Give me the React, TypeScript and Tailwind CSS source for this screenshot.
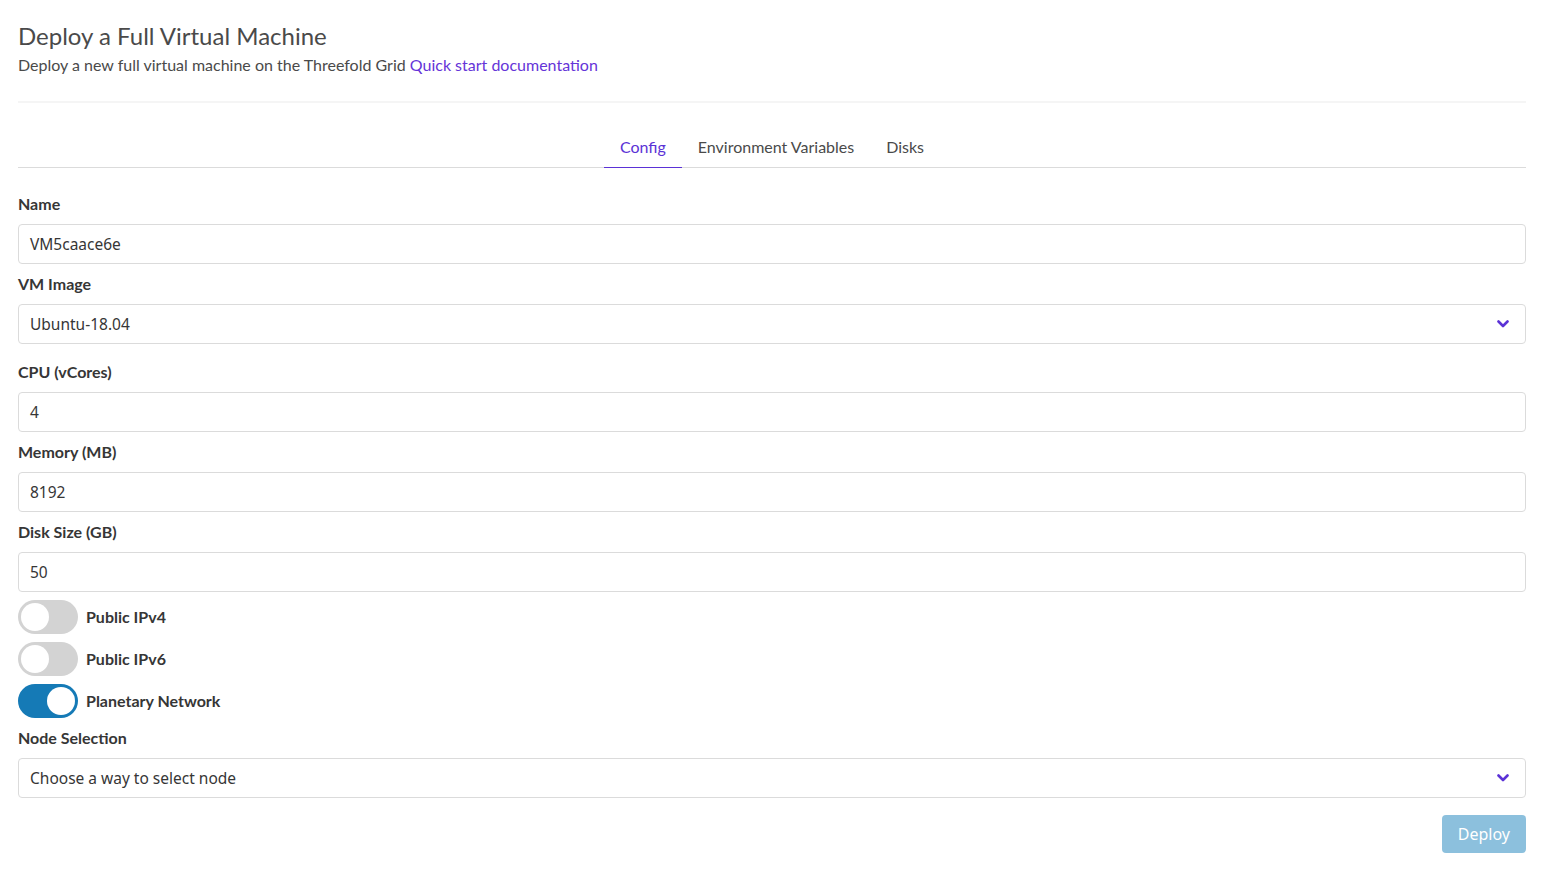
import React, { useState } from 'react';

const FONT = { fontFamily: 'Lato, "Noto Sans", sans-serif' };
const INPUT_FONT = { fontFamily: '"Noto Sans", Lato, sans-serif' };

const Label: React.FC<{ children: React.ReactNode }> = ({ children }) => (
  <label className="block h-6 leading-6 mb-2 text-[16px] font-bold text-[#363636]">{children}</label>
);

const TextField: React.FC<{ label: string; value: string }> = ({ label, value }) => (
  <div className="mb-2">
    <Label>{label}</Label>
    <div
      className="h-10 rounded border border-[#dbdbdb] bg-white px-[11px] pt-[2px] flex items-center text-[15.5px] text-[#363636]"
      style={INPUT_FONT}
    >
      {value}
    </div>
  </div>
);

const SelectField: React.FC<{ label: string; value: string; className?: string }> = ({ label, value, className }) => (
  <div className={className}>
    <Label>{label}</Label>
    <div
      className="h-10 rounded border border-[#dbdbdb] bg-white pl-[11px] pr-4 flex items-center justify-between text-[15.5px] text-[#363636]"
      style={INPUT_FONT}
    >
      <span className="pt-[2px]">{value}</span>
      <svg width="12" height="8" viewBox="0 0 12 8" fill="none">
        <path d="M1.5 1.5 L6 6 L10.5 1.5" stroke="#5b32d6" strokeWidth="2.6" strokeLinecap="round" strokeLinejoin="round" />
      </svg>
    </div>
  </div>
);

const Toggle: React.FC<{ label: string; initial?: boolean }> = ({ label, initial = false }) => {
  const [on, setOn] = useState(initial);
  return (
    <div className="flex items-center h-[34px] mb-2 cursor-pointer" onClick={() => setOn(!on)}>
      <div className={`relative w-[60px] h-[34px] rounded-full ${on ? 'bg-[#157ab6]' : 'bg-[#d3d3d3]'}`}>
        <div
          className={`absolute top-[3px] w-[28px] h-[28px] rounded-full bg-white ${on ? 'left-[29px]' : 'left-[3px]'}`}
        />
      </div>
      <span className="ml-2 text-[16px] font-bold text-[#363636]">{label}</span>
    </div>
  );
};

export default function App() {
  const [tab, setTab] = useState('Config');
  const tabs = ['Config', 'Environment Variables', 'Disks'];

  return (
    <div className="min-h-screen bg-white pl-[18px] pr-[17px] pt-5 pb-4" style={FONT}>
      {/* Header */}
      <h1 className="text-[24px] leading-8 text-[#4a4a4a]">Deploy a Full Virtual Machine</h1>
      <p className="mt-[2px] text-[16px] leading-[22px] text-[#4a4a4a]">
        Deploy a new full virtual machine on the Threefold Grid{' '}
        <a href="#" className="text-[#6534d8]">Quick start documentation</a>
      </p>
      <div className="mt-[25px] h-[2px] bg-[#f5f5f5]" />

      {/* Tabs */}
      <div className="mt-[25px] flex justify-center border-b border-[#dbdbdb]">
        {tabs.map(t => (
          <button
            key={t}
            onClick={() => setTab(t)}
            className={`h-10 px-4 pb-[2px] -mb-px text-[16px] border-b ${
              tab === t ? 'text-[#5b32d6] border-[#5b32d6]' : 'text-[#4a4a4a] border-transparent'
            }`}
          >
            {t}
          </button>
        ))}
      </div>

      {/* Form */}
      <div className="mt-6">
        <TextField label="Name" value="VM5caace6e" />
        <SelectField label="VM Image" value="Ubuntu-18.04" className="mb-4" />
        <TextField label="CPU (vCores)" value="4" />
        <TextField label="Memory (MB)" value="8192" />
        <TextField label="Disk Size (GB)" value="50" />
        <Toggle label="Public IPv4" />
        <Toggle label="Public IPv6" />
        <Toggle label="Planetary Network" initial />
        <SelectField label="Node Selection" value="Choose a way to select node" />
      </div>

      <div className="mt-[17px] flex justify-end">
        <button
          className="h-[38px] px-4 rounded bg-[#8cc0dd] text-white text-[16px]"
          style={INPUT_FONT}
        >
          Deploy
        </button>
      </div>
    </div>
  );
}
